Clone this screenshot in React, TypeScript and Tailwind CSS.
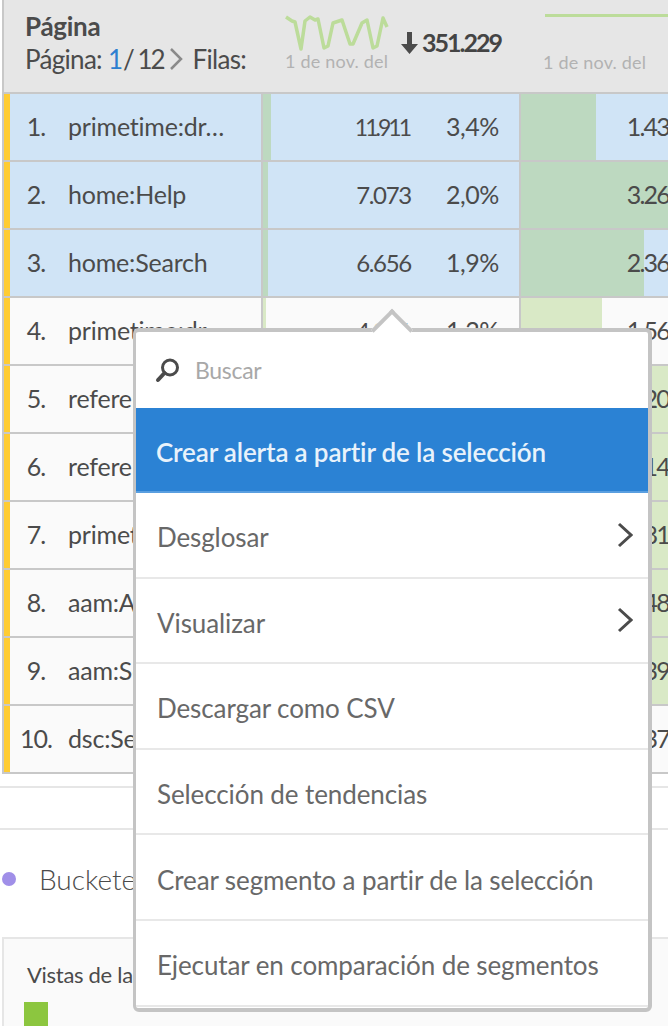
const ROWS = [
  { n: "1.", label: "primetime:dr…", v: "11.911", pct: "3,4%", bar: 8, bar2: 75, v2: "1.43", sel: true },
  { n: "2.", label: "home:Help", v: "7.073", pct: "2,0%", bar: 5, bar2: 147, v2: "3.26", sel: true },
  { n: "3.", label: "home:Search", v: "6.656", pct: "1,9%", bar: 5, bar2: 123, v2: "2.36", sel: true },
  { n: "4.", label: "primetime:dr…", v: "4.201", pct: "1,2%", bar: 3, bar2: 81, v2: "1.56", sel: false },
  { n: "5.", label: "referer", v: "", pct: "", bar: 3, bar2: 147, v2: "1.20", sel: false },
  { n: "6.", label: "referer", v: "", pct: "", bar: 3, bar2: 147, v2: "1.14", sel: false },
  { n: "7.", label: "primetime", v: "", pct: "", bar: 3, bar2: 147, v2: "1.81", sel: false },
  { n: "8.", label: "aam:Audience", v: "", pct: "", bar: 3, bar2: 147, v2: "1.48", sel: false },
  { n: "9.", label: "aam:Segment", v: "", pct: "", bar: 3, bar2: 147, v2: "1.39", sel: false },
  { n: "10.", label: "dsc:Search", v: "", pct: "", bar: 3, bar2: 0, v2: "1.37", sel: false },
];

const MENU = ["Desglosar", "Visualizar", "Descargar como CSV", "Selección de tendencias", "Crear segmento a partir de la selección", "Ejecutar en comparación de segmentos"];

const SPARK = "16,16 22,20 25,21 31,48 35,20 40,16 45,19 48,18 54,47 58,45 63,22 72,19 80,43 83,43 92,22 97,19 103,47 107,45 113,17 117,26";

export default function App() {
  return (
    <div className="relative w-[668px] h-[1026px] overflow-hidden bg-white text-[#4b4b4b] font-['Lato','Noto_Sans',sans-serif]">
      {/* table */}
      <div className="ml-[2px] border-l-2 border-b-2 border-[#c8c8c8]">
        {/* header */}
        <div className="flex h-[94px] bg-[#e6e6e6] border-b-2 border-[#c8c8c8]">
          <div className="w-[263px] shrink-0 pl-[21px] pt-[11px]">
            <div className="text-[26px] leading-[30px] font-bold tracking-[-0.3px]">Página</div>
            <div className="flex items-center text-[26px] leading-[32px] mt-[2px] tracking-[-0.7px] whitespace-nowrap">
              Página:
              <span className="text-[#2d7fd0] ml-[6px] tracking-[-3px]">1</span>
              <span className="ml-[3px] tracking-[-2px]">/ 12</span>
              <svg width="14" height="22" viewBox="0 0 14 22" fill="none" stroke="#8a8a8a" strokeWidth="2.500" className="ml-[5px]">
                <polyline points="2,1 12,11 2,21" />
              </svg>
              <span className="ml-[10px]">Filas:</span>
            </div>
          </div>
          <div className="w-[258px] shrink-0 flex">
            <div className="w-[134px] shrink-0">
              <svg width="125" height="50" viewBox="0 0 125 50" className="block mt-[1px]" fill="none">
                <polyline points={SPARK} stroke="#bcdc9a" strokeWidth="3.500" strokeLinejoin="round" transform="translate(3 0)" />
              </svg>
              <div className="ml-[18px] text-[18px] leading-[20px] text-[#b2b2b2] tracking-[0.2px] whitespace-nowrap">1 de nov. del</div>
            </div>
            <div className="flex items-center h-[86px] font-bold text-[25px] tracking-[-2px] text-[#444]">
              <svg width="17" height="22" viewBox="0 0 17 22" className="mr-[4px]" fill="#4b4b4b">
                <path d="M6 0h5v12h6l-8.500 10L0 12h6z" />
              </svg>
              351.229
            </div>
          </div>
          <div className="flex-1">
            <div className="ml-[20px] mt-[14px] h-[3px] bg-[#bcdc9a]" />
            <div className="ml-[18px] mt-[35px] text-[18px] leading-[20px] text-[#b2b2b2] tracking-[0.2px] whitespace-nowrap">1 de nov. del</div>
          </div>
        </div>
        {/* rows */}
        {ROWS.map((r, i) => (
          <div key={i} className={`flex text-[25px] whitespace-nowrap ${i < 9 ? "h-[68px] border-b-2 border-[#c8c8c8]" : "h-[66px]"} ${r.sel ? "bg-[#d0e4f6]" : "bg-[#fafafa]"}`}>
            <div className="w-[6px] shrink-0 bg-[#ffcc33]" />
            <div className="w-[253px] shrink-0 flex items-center tracking-[-0.2px] border-r-2 border-[#c8c8c8]">
              <span className="w-[52px] text-center tracking-[-1px]">{r.n}</span>
              <span className="ml-[6px]">{r.label}</span>
            </div>
            <div className="relative w-[258px] shrink-0 flex items-center justify-end border-r-2 border-[#c8c8c8]">
              <div className={`absolute left-0 inset-y-0 ${r.sel ? "bg-[#bdd9c0]" : "bg-[#d9e9c6]"}`} style={{ width: r.bar }} />
              <span className={i === 0 ? "text-[23px] tracking-[-3px] mr-[2px]" : "text-[24px] tracking-[-1.300px]"}>{r.v}</span>
              <span className="w-[108px] text-right pr-[20px] tracking-[-0.4px]">{r.pct}</span>
            </div>
            <div className="relative flex-1 flex items-center justify-end tracking-[-1.800px]">
              <div className={`absolute left-0 inset-y-0 ${r.sel ? "bg-[#bdd9c0]" : "bg-[#d9e9c6]"}`} style={{ width: r.bar2 }} />
              <span className="relative -mr-[1px]">{r.v2}</span>
            </div>
          </div>
        ))}
      </div>

      <div className="mt-[12px] h-[2px] bg-[#e6e6e6]" />
      <div className="mt-[40px] h-[2px] bg-[#e6e6e6]" />

      {/* bucketed */}
      <div className="flex items-center h-[107px] pb-[9px]">
        <div className="ml-[2px] w-[14px] h-[14px] rounded-full bg-[#a08fe8]" />
        <span className="ml-[23px] text-[28px] font-light text-[#4b4b4b]">Bucketed</span>
      </div>

      {/* panel below */}
      <div className="ml-[2px] h-[100px] bg-[#fafafa] border-t-2 border-l-2 border-[#e6e6e6] pl-[23px] pt-[22px]">
        <div className="text-[22px] leading-[28px] tracking-[-0.3px]">Vistas de la página</div>
        <div className="mt-[13px] w-[24px] h-[24px] -ml-[3px] bg-[#8cc63f]" />
      </div>

      {/* context menu */}
      <div className="absolute left-[133px] top-[328px] w-[519px] h-[684px] bg-white border-4 border-l-[3px] border-[#c4c4c4] rounded-[6px] text-[#686868]">
        <div className="absolute left-[241px] top-[-17px] w-[30px] h-[30px] rotate-45 bg-white border-t-4 border-l-4 border-[#c4c4c4]" />
        <div className="relative flex items-center h-[76px] pl-[19px]">
          <svg width="26" height="26" viewBox="0 0 26 26" fill="none" stroke="#4b4b4b">
            <circle cx="15" cy="10.500" r="7.500" strokeWidth="3" />
            <path d="M9.500 16 3 23" strokeWidth="4" strokeLinecap="round" />
          </svg>
          <span className="ml-[14px] text-[23px] text-[#a8a8a8] tracking-[-0.3px]">Buscar</span>
        </div>
        <div className="relative flex items-center h-[85px] pt-[5px] bg-[#2b82d4] border-b-2 border-[#5a9fe0] pl-[20px] text-[26px] font-semibold text-[#e8f2fb] tracking-[-0.15px]">
          Crear alerta a partir de la selección
        </div>
        {MENU.map((m, i) => (
          <div key={i} className="flex items-center justify-between h-[85.6px] pt-[6px] pl-[21px] pr-[15px] text-[26px] tracking-[-0.1px] border-b-2 border-[#e8e8e8] whitespace-nowrap">
            {m}
            {i < 2 && (
              <svg width="16" height="26" viewBox="0 0 16 26" fill="none" stroke="#4b4b4b" strokeWidth="3" className="-mt-[6px]">
                <polyline points="2,2 14,13 2,24" />
              </svg>
            )}
          </div>
        ))}
      </div>
    </div>
  );
}
